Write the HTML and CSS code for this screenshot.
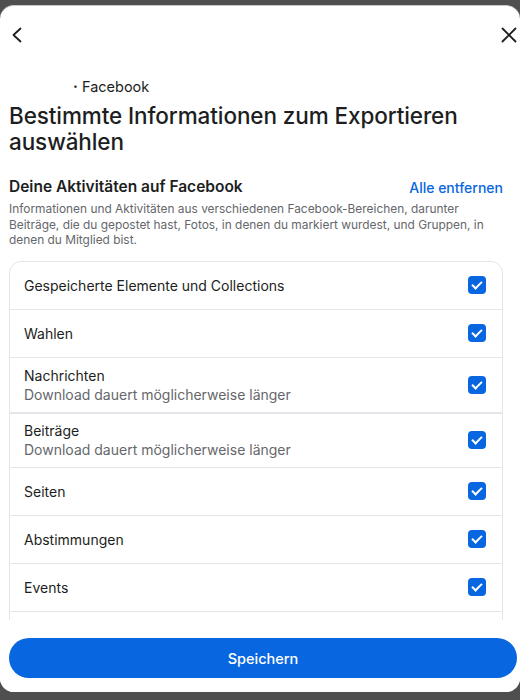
FILE: index.html
```html
<!DOCTYPE html>
<html lang="de">
<head>
<meta charset="utf-8">
<title>Informationen exportieren</title>
<link rel="stylesheet" href="styles.css">
</head>
<body>
<div class="sheet">
  <header class="nav">
    <button class="icon-btn" aria-label="Zurück">
      <svg width="12" height="16" viewBox="0 0 12 16"><path d="M9.5 1.5 L2.5 8 L9.5 14.5" fill="none" stroke="#1c1e21" stroke-width="1.8" stroke-linecap="round" stroke-linejoin="round"/></svg>
    </button>
    <button class="icon-btn" aria-label="Schließen">
      <svg width="16" height="16" viewBox="0 0 16 16"><path d="M1.5 1.5 L14.5 14.5 M14.5 1.5 L1.5 14.5" fill="none" stroke="#1c1e21" stroke-width="1.8" stroke-linecap="round"/></svg>
    </button>
  </header>

  <main class="content">
    <div class="account"><span class="dot">·</span> Facebook</div>
    <h1 class="title">Bestimmte Informationen zum Exportieren auswählen</h1>

    <div class="section-head">
      <h2 class="section-title">Deine Aktivitäten auf Facebook</h2>
      <a class="link" href="#">Alle entfernen</a>
    </div>
    <p class="desc">Informationen und Aktivitäten aus verschiedenen Facebook-Bereichen, darunter Beiträge, die du gepostet hast, Fotos, in denen du markiert wurdest, und Gruppen, in denen du Mitglied bist.</p>

    <ul class="list">
      <li class="row"><div class="label">Gespeicherte Elemente und Collections</div><span class="check"></span></li>
      <li class="row"><div class="label">Wahlen</div><span class="check"></span></li>
      <li class="row tall"><div class="label">Nachrichten<span class="sub">Download dauert möglicherweise länger</span></div><span class="check"></span></li>
      <li class="row tall"><div class="label">Beiträge<span class="sub">Download dauert möglicherweise länger</span></div><span class="check"></span></li>
      <li class="row"><div class="label">Seiten</div><span class="check"></span></li>
      <li class="row"><div class="label">Abstimmungen</div><span class="check"></span></li>
      <li class="row"><div class="label">Events</div><span class="check"></span></li>
      <li class="row" aria-hidden="true"></li>
    </ul>
  </main>

  <footer class="footer">
    <button class="primary">Speichern</button>
  </footer>
</div>
</body>
</html>
```

FILE: styles.css
```css
* { box-sizing: border-box; }

html, body {
  margin: 0;
  height: 700px;
  overflow: hidden;
}

body {
  background: #4f4f4f;
  font-family: "Inter", "Roboto", "Noto Sans", sans-serif;
  color: #1c1e21;
  padding-top: 5px;
}

.sheet {
  height: 687px;
  background: #fff;
  border-radius: 14px;
  border-top: 1px solid #c8c8c8;
  display: flex;
  flex-direction: column;
  overflow: hidden;
}

.nav {
  height: 57px;
  flex: none;
  display: flex;
  align-items: center;
  justify-content: space-between;
  padding: 0 2px 0 8px;
}

.icon-btn {
  border: 0;
  background: none;
  padding: 0;
  width: 18px;
  height: 18px;
  display: flex;
  align-items: center;
  justify-content: center;
  cursor: pointer;
}

.content {
  flex: 1;
  min-height: 0;
  overflow: hidden;
  padding: 0 17px 0 9px;
}

.account {
  padding-left: 64px;
  font-size: 14.5px;
  line-height: 20px;
  margin-top: 14px;
}

.dot { font-weight: 700; }

.title {
  margin: 6px 0 0;
  font-size: 22.5px;
  font-weight: 500;
  line-height: 25.5px;
  letter-spacing: -0.1px;
}

.section-head {
  margin-top: 23px;
  display: flex;
  justify-content: space-between;
  align-items: center;
}

.section-title {
  margin: 0;
  font-size: 15.5px;
  font-weight: 600;
  line-height: 20px;
}

.link {
  color: #0866e0;
  text-decoration: none;
  font-size: 14px;
  font-weight: 500;
}

.desc {
  margin: 4px 0 0;
  font-size: 11.9px;
  line-height: 15.5px;
  color: #65676b;
}

.list {
  list-style: none;
  margin: 13px 0 0;
  padding: 0;
  border: 1px solid #e4e6eb;
  border-radius: 12px;
}

.row {
  display: flex;
  align-items: center;
  justify-content: space-between;
  min-height: 48px;
  padding: 0 16px 0 14px;
  border-top: 1px solid #e4e6eb;
}

.row:first-child { border-top: 0; min-height: 47px; }

.row.tall { min-height: 55px; }
.row.tall + .row.tall { border-top-width: 2px; }

.label {
  font-size: 14px;
  line-height: 19px;
  display: flex;
  flex-direction: column;
}

.sub {
  color: #65676b;
  font-size: 14px;
}

.check {
  width: 18px;
  height: 18px;
  border-radius: 4px;
  background: #0866e0;
  position: relative;
  flex: none;
}

.check::after {
  content: "";
  position: absolute;
  left: 6px;
  top: 3px;
  width: 4px;
  height: 8px;
  border: solid #fff;
  border-width: 0 2px 2px 0;
  transform: rotate(45deg);
}

.footer {
  flex: none;
  padding: 18px 3px 14px 9px;
  background: #fff;
}

.primary {
  width: 100%;
  height: 40px;
  border: 0;
  border-radius: 20px;
  background: #0866e0;
  color: #fff;
  font-family: inherit;
  font-size: 14.5px;
  font-weight: 500;
}
```
